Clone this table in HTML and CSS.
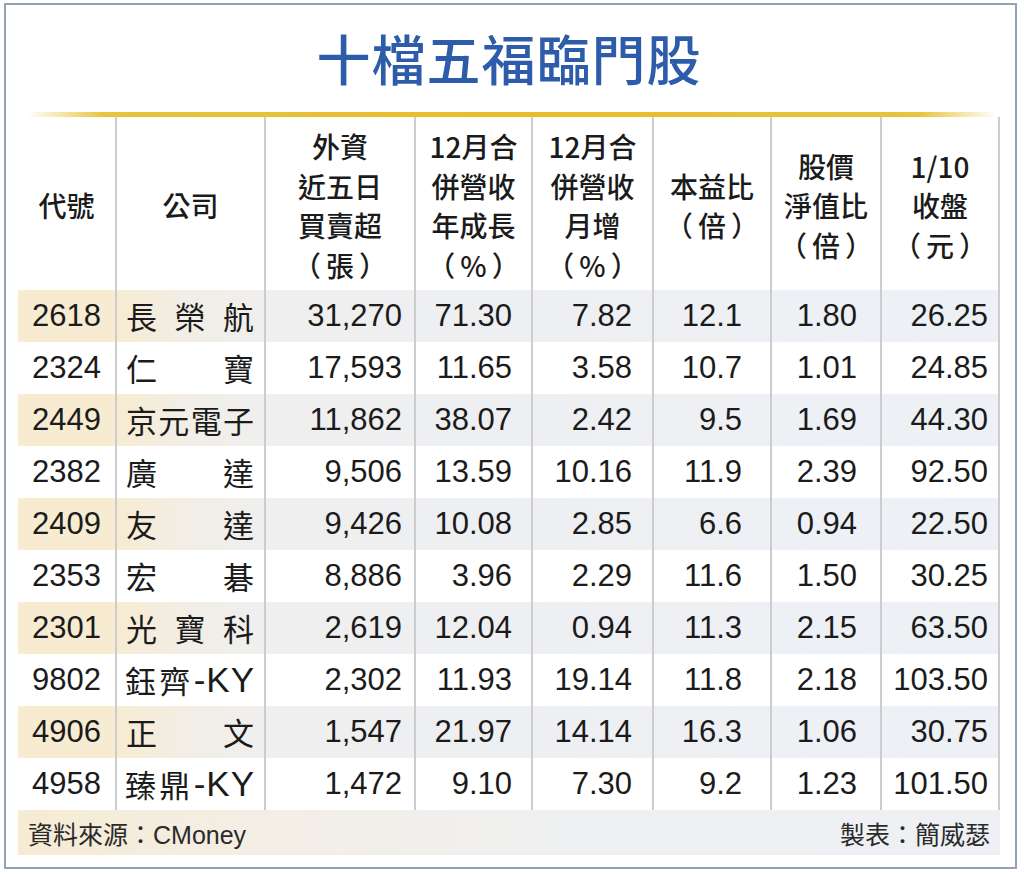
FILE: index.html
```html
<!DOCTYPE html>
<html lang="zh-Hant">
<head>
<meta charset="utf-8">
<title>十檔五福臨門股</title>
<link rel="stylesheet" href="styles.css">
</head>
<body>
<div class="frame">
  <div class="title">十檔五福臨門股</div>
  <div class="goldline"></div>
  <div class="table">
    <div class="row head">
      <div class="cell"><div>代號</div></div>
      <div class="cell"><div>公司</div></div>
      <div class="cell"><div>外資</div><div>近五日</div><div>買賣超</div><div><span class="pl">（</span>張<span class="pr">）</span></div></div>
      <div class="cell"><div>12月合</div><div>併營收</div><div>年成長</div><div><span class="pl">（</span>%<span class="pr">）</span></div></div>
      <div class="cell"><div>12月合</div><div>併營收</div><div>月增</div><div><span class="pl">（</span>%<span class="pr">）</span></div></div>
      <div class="cell"><div>本益比</div><div><span class="pl">（</span>倍<span class="pr">）</span></div></div>
      <div class="cell"><div>股價</div><div>淨值比</div><div><span class="pl">（</span>倍<span class="pr">）</span></div></div>
      <div class="cell"><div>1/10</div><div>收盤</div><div><span class="pl">（</span>元<span class="pr">）</span></div></div>
    </div>

    <div class="row data odd">
      <div class="cell code">2618</div>
      <div class="cell name"><span>長</span><span>榮</span><span>航</span></div>
      <div class="cell num c3">31,270</div><div class="cell num c4">71.30</div><div class="cell num c5">7.82</div><div class="cell num c6">12.1</div><div class="cell num c7">1.80</div><div class="cell num c8">26.25</div>
    </div>
    <div class="row data">
      <div class="cell code">2324</div>
      <div class="cell name"><span>仁</span><span>寶</span></div>
      <div class="cell num c3">17,593</div><div class="cell num c4">11.65</div><div class="cell num c5">3.58</div><div class="cell num c6">10.7</div><div class="cell num c7">1.01</div><div class="cell num c8">24.85</div>
    </div>
    <div class="row data odd">
      <div class="cell code">2449</div>
      <div class="cell name"><span>京</span><span>元</span><span>電</span><span>子</span></div>
      <div class="cell num c3">11,862</div><div class="cell num c4">38.07</div><div class="cell num c5">2.42</div><div class="cell num c6">9.5</div><div class="cell num c7">1.69</div><div class="cell num c8">44.30</div>
    </div>
    <div class="row data">
      <div class="cell code">2382</div>
      <div class="cell name"><span>廣</span><span>達</span></div>
      <div class="cell num c3">9,506</div><div class="cell num c4">13.59</div><div class="cell num c5">10.16</div><div class="cell num c6">11.9</div><div class="cell num c7">2.39</div><div class="cell num c8">92.50</div>
    </div>
    <div class="row data odd">
      <div class="cell code">2409</div>
      <div class="cell name"><span>友</span><span>達</span></div>
      <div class="cell num c3">9,426</div><div class="cell num c4">10.08</div><div class="cell num c5">2.85</div><div class="cell num c6">6.6</div><div class="cell num c7">0.94</div><div class="cell num c8">22.50</div>
    </div>
    <div class="row data">
      <div class="cell code">2353</div>
      <div class="cell name"><span>宏</span><span>碁</span></div>
      <div class="cell num c3">8,886</div><div class="cell num c4">3.96</div><div class="cell num c5">2.29</div><div class="cell num c6">11.6</div><div class="cell num c7">1.50</div><div class="cell num c8">30.25</div>
    </div>
    <div class="row data odd">
      <div class="cell code">2301</div>
      <div class="cell name"><span>光</span><span>寶</span><span>科</span></div>
      <div class="cell num c3">2,619</div><div class="cell num c4">12.04</div><div class="cell num c5">0.94</div><div class="cell num c6">11.3</div><div class="cell num c7">2.15</div><div class="cell num c8">63.50</div>
    </div>
    <div class="row data">
      <div class="cell code">9802</div>
      <div class="cell name tight"><span>鈺</span><span>齊</span><span class="ky">-KY</span></div>
      <div class="cell num c3">2,302</div><div class="cell num c4">11.93</div><div class="cell num c5">19.14</div><div class="cell num c6">11.8</div><div class="cell num c7">2.18</div><div class="cell num c8">103.50</div>
    </div>
    <div class="row data odd">
      <div class="cell code">4906</div>
      <div class="cell name"><span>正</span><span>文</span></div>
      <div class="cell num c3">1,547</div><div class="cell num c4">21.97</div><div class="cell num c5">14.14</div><div class="cell num c6">16.3</div><div class="cell num c7">1.06</div><div class="cell num c8">30.75</div>
    </div>
    <div class="row data">
      <div class="cell code">4958</div>
      <div class="cell name tight"><span>臻</span><span>鼎</span><span class="ky">-KY</span></div>
      <div class="cell num c3">1,472</div><div class="cell num c4">9.10</div><div class="cell num c5">7.30</div><div class="cell num c6">9.2</div><div class="cell num c7">1.23</div><div class="cell num c8">101.50</div>
    </div>
  </div>
  <div class="footer">
    <span>資料來源：CMoney</span>
    <span>製表：簡威瑟</span>
  </div>
</div>
</body>
</html>
```

FILE: styles.css
```css
* { box-sizing: border-box; }

html, body {
  margin: 0;
  padding: 0;
  background: #ffffff;
}

body {
  padding: 3px 7px 0 4px;
  font-family: "Liberation Sans", "Noto Sans CJK TC", sans-serif;
  color: #1b1b1b;
}

.frame {
  width: 1013px;
  height: 866px;
  border: 2px solid #95a1b5;
  background: #ffffff;
  padding: 0 15px 12px 12px;
  display: flex;
  flex-direction: column;
}

.title {
  height: 107px;
  padding-bottom: 2px;
  display: flex;
  align-items: center;
  justify-content: center;
  font-family: "Noto Sans CJK TC", sans-serif;
  font-weight: 500;
  font-size: 54px;
  line-height: 1;
  color: #2d5cab;
  letter-spacing: 1px;
}

.goldline {
  height: 5px;
  margin: 0 3px 0 9px;
  background: linear-gradient(90deg, rgba(232,192,46,0) 0%, #e8c43c 8%, #e6be2a 50%, #e8c43c 92%, rgba(232,192,46,0) 100%);
}

.table {
  display: flex;
  flex-direction: column;
}

.row {
  display: grid;
  grid-template-columns: 99px 149px 150px 117px 121px 118px 110px 118px;
}

.cell {
  border-right: 2px solid #cdcdcd;
}

.head {
  height: 173px;
}

.head .cell {
  display: flex;
  flex-direction: column;
  justify-content: center;
  align-items: center;
  padding-top: 5px;
  font-family: "Noto Sans CJK TC", sans-serif;
  font-weight: 500;
  font-size: 28px;
  line-height: 39.5px;
  color: #1b1b1b;
  white-space: nowrap;
}

.pl {
  margin-left: -6px;
  margin-right: 5px;
}

.pr {
  margin-left: 5px;
  margin-right: -6px;
}

.data {
  height: 52px;
  font-size: 31px;
  line-height: 52px;
}

.data.odd {
  background: linear-gradient(90deg, #f7ebd2 0%, #f7ebd2 10%, #f2eee6 17%, #efefef 26%, #eeeff2 50%, #edf1f6 100%);
}

.code {
  text-align: center;
}

.name {
  display: flex;
  justify-content: space-between;
  padding: 0 10px 0 9px;
  font-family: "Noto Sans CJK TC", sans-serif;
  font-size: 31px;
}

.name.tight {
  padding-left: 8px;
  padding-right: 9px;
}

.ky {
  font-family: "Liberation Sans", sans-serif;
  font-size: 35px;
  letter-spacing: 1px;
}

.num { text-align: right; }
.c3 { padding-right: 12px; }
.c4 { padding-right: 19px; }
.c5 { padding-right: 20px; }
.c6 { padding-right: 28px; }
.c7 { padding-right: 23px; }
.c8 { padding-right: 10px; }

.footer {
  height: 45px;
  display: flex;
  justify-content: space-between;
  align-items: center;
  padding: 0 10px 0 10px;
  background: linear-gradient(90deg, #f6ebd4 0%, #f3eee5 25%, #eff0f1 55%, #eef0f4 100%);
  font-size: 25px;
  color: #2a2a2a;
}
```
